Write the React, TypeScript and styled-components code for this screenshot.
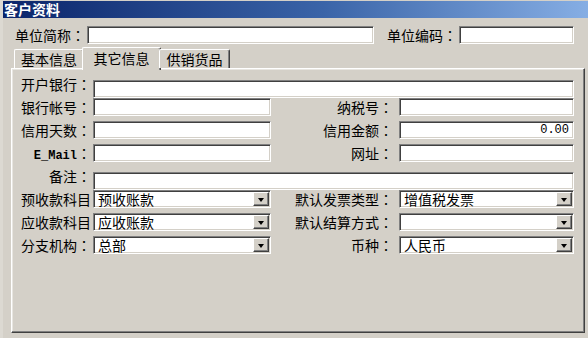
import React from "react";
import styled, { createGlobalStyle, css } from "styled-components";

const GlobalStyle = createGlobalStyle`
  html, body { margin: 0; padding: 0; background: #d4d0c8; }
  body { font-family: "Noto Sans CJK SC", "Noto Sans", sans-serif; }
  * { box-sizing: border-box; }
`;

const Window = styled.div`
  width: 588px;
  height: 338px;
  background: #d4d0c8;
  display: flex;
  flex-direction: column;
  border-left: 3px solid #dcd9d2;
  overflow: hidden;
`;

const TitleBar = styled.div`
  height: 17px;
  margin-top: 1px;
  margin-left: -3px;
  padding-left: 4px;
  display: flex;
  align-items: center;
  background: linear-gradient(to right, #0a246a 0%, #3a64a8 55%, #86aee4 100%);
  color: #ffffff;
  font-size: 14px;
  font-weight: bold;
  line-height: 17px;
`;

const TopRow = styled.div`
  display: flex;
  align-items: center;
  height: 18px;
  margin-top: 8px;
  padding-left: 12px;
`;

const sunken = css`
  border-style: solid;
  border-width: 1px;
  border-color: #808080 #ffffff #ffffff #808080;
  box-shadow: inset 1px 1px 0 #404040, inset -1px -1px 0 #d4d0c8;
  background: #ffffff;
`;

const TextBox = styled.input<{ $w?: number; $right?: boolean }>`
  ${sunken}
  width: ${(p) => (p.$w ? `${p.$w}px` : "100%")};
  height: 18px;
  padding: 0 4px;
  margin: 0;
  outline: none;
  text-align: ${(p) => (p.$right ? "right" : "left")};
  font-family: ${(p) => (p.$right ? `"Liberation Mono", monospace` : `"Noto Sans CJK SC", sans-serif`)};
  font-size: 12px;
  color: #000;
`;

const TopLabel = styled.span<{ $gap?: number }>`
  font-size: 14px;
  line-height: 18px;
  color: #000;
  margin-left: ${(p) => p.$gap ?? 0}px;
  margin-right: 2px;
  white-space: nowrap;
`;

const TabStrip = styled.div`
  display: flex;
  align-items: flex-end;
  height: 22px;
  margin-top: 2px;
  padding-left: 11px;
  position: relative;
  z-index: 2;
`;

const Tab = styled.div<{ $active?: boolean; $w: number }>`
  width: ${(p) => p.$w}px;
  height: ${(p) => (p.$active ? 23 : 19)}px;
  margin-bottom: ${(p) => (p.$active ? -2 : 0)}px;
  margin-left: ${(p) => (p.$active ? -2 : 0)}px;
  margin-right: ${(p) => (p.$active ? -2 : 0)}px;
  background: #d4d0c8;
  border-top: 1px solid #ffffff;
  border-left: 1px solid #ffffff;
  border-right: 1px solid #404040;
  box-shadow: inset -1px 0 0 #808080;
  border-radius: 2px 2px 0 0;
  display: flex;
  justify-content: center;
  align-items: ${(p) => (p.$active ? "flex-start" : "center")};
  padding-top: ${(p) => (p.$active ? 1 : 0)}px;
  font-size: 14px;
  line-height: 18px;
  color: #000;
`;

const Panel = styled.div`
  flex: 1;
  margin: 0 3px 5px 8px;
  border-top: 1px solid #ffffff;
  border-left: 1px solid #ffffff;
  border-right: 1px solid #404040;
  border-bottom: 1px solid #404040;
  box-shadow: inset -1px -1px 0 #808080, inset 1px 1px 0 #e8e6e1;
  position: relative;
  z-index: 1;
`;

const FormGrid = styled.div`
  display: grid;
  grid-template-columns: 73px 178px 1fr 175px;
  grid-auto-rows: 18px;
  column-gap: 2px;
  row-gap: 5px;
  padding: 6px 10px 0 6px;
`;

const Label = styled.span<{ $mono?: boolean; $pad?: number }>`
  text-align: right;
  white-space: nowrap;
  font-size: ${(p) => (p.$mono ? "12px" : "14px")};
  font-family: ${(p) => (p.$mono ? `"Liberation Mono", monospace` : `"Noto Sans CJK SC", sans-serif`)};
  font-weight: ${(p) => (p.$mono ? "bold" : "normal")};
  line-height: 18px;
  color: #000;
  padding-right: ${(p) => p.$pad ?? 0}px;
`;

const Colon = styled.span`
  font-family: "Noto Sans CJK TC", "Noto Sans CJK SC", sans-serif;
  font-size: 14px;
  font-weight: normal;
`;

const Wide = styled.div`
  grid-column: 2 / 5;
`;

const Select = styled.div`
  ${sunken}
  height: 18px;
  display: flex;
  align-items: center;
  padding: 1px 1px 1px 4px;
`;

const SelectText = styled.span`
  flex: 1;
  font-size: 14px;
  line-height: 14px;
  color: #000;
  white-space: nowrap;
`;

const DropButton = styled.div`
  width: 16px;
  height: 14px;
  background: #d4d0c8;
  border-style: solid;
  border-width: 1px;
  border-color: #ffffff #404040 #404040 #ffffff;
  box-shadow: inset -1px -1px 0 #808080;
  display: flex;
  align-items: center;
  justify-content: center;
`;

const Arrow = styled.span`
  width: 0;
  height: 0;
  border-left: 3.5px solid transparent;
  border-right: 3.5px solid transparent;
  border-top: 4px solid #000;
  margin-top: 1px;
`;

function Combo({ value }: { value: string }) {
  return (
    <Select>
      <SelectText>{value}</SelectText>
      <DropButton>
        <Arrow />
      </DropButton>
    </Select>
  );
}

function FieldLabel({ text, pad, mono }: { text: string; pad?: number; mono?: boolean }) {
  return (
    <Label $pad={pad} $mono={mono}>
      {text}
      <Colon>：</Colon>
    </Label>
  );
}

export default function App() {
  return (
    <>
      <GlobalStyle />
      <Window>
        <TitleBar>客户资料</TitleBar>
        <TopRow>
          <TopLabel>
            单位简称<Colon>：</Colon>
          </TopLabel>
          <TextBox $w={287} readOnly value="" />
          <TopLabel $gap={13}>
            单位编码<Colon>：</Colon>
          </TopLabel>
          <TextBox $w={115} readOnly value="" />
        </TopRow>
        <TabStrip>
          <Tab $w={70}>基本信息</Tab>
          <Tab $w={79} $active>
            其它信息
          </Tab>
          <Tab $w={71}>供销货品</Tab>
        </TabStrip>
        <Panel>
          <FormGrid>
            <FieldLabel text="开户银行" />
            <Wide>
              <TextBox readOnly value="" />
            </Wide>

            <FieldLabel text="银行帐号" />
            <TextBox readOnly value="" />
            <FieldLabel text="纳税号" pad={4} />
            <TextBox readOnly value="" />

            <FieldLabel text="信用天数" />
            <TextBox readOnly value="" />
            <FieldLabel text="信用金额" pad={4} />
            <TextBox $right readOnly value="0.00" />

            <FieldLabel text="E_Mail" mono />
            <TextBox readOnly value="" />
            <FieldLabel text="网址" pad={4} />
            <TextBox readOnly value="" />

            <FieldLabel text="备注" />
            <Wide>
              <TextBox readOnly value="" />
            </Wide>

            <Label>预收款科目</Label>
            <Combo value="预收账款" />
            <FieldLabel text="默认发票类型" pad={4} />
            <Combo value="增值税发票" />

            <Label>应收款科目</Label>
            <Combo value="应收账款" />
            <FieldLabel text="默认结算方式" pad={4} />
            <Combo value="" />

            <FieldLabel text="分支机构" />
            <Combo value="总部" />
            <FieldLabel text="币种" pad={4} />
            <Combo value="人民币" />
          </FormGrid>
        </Panel>
      </Window>
    </>
  );
}
